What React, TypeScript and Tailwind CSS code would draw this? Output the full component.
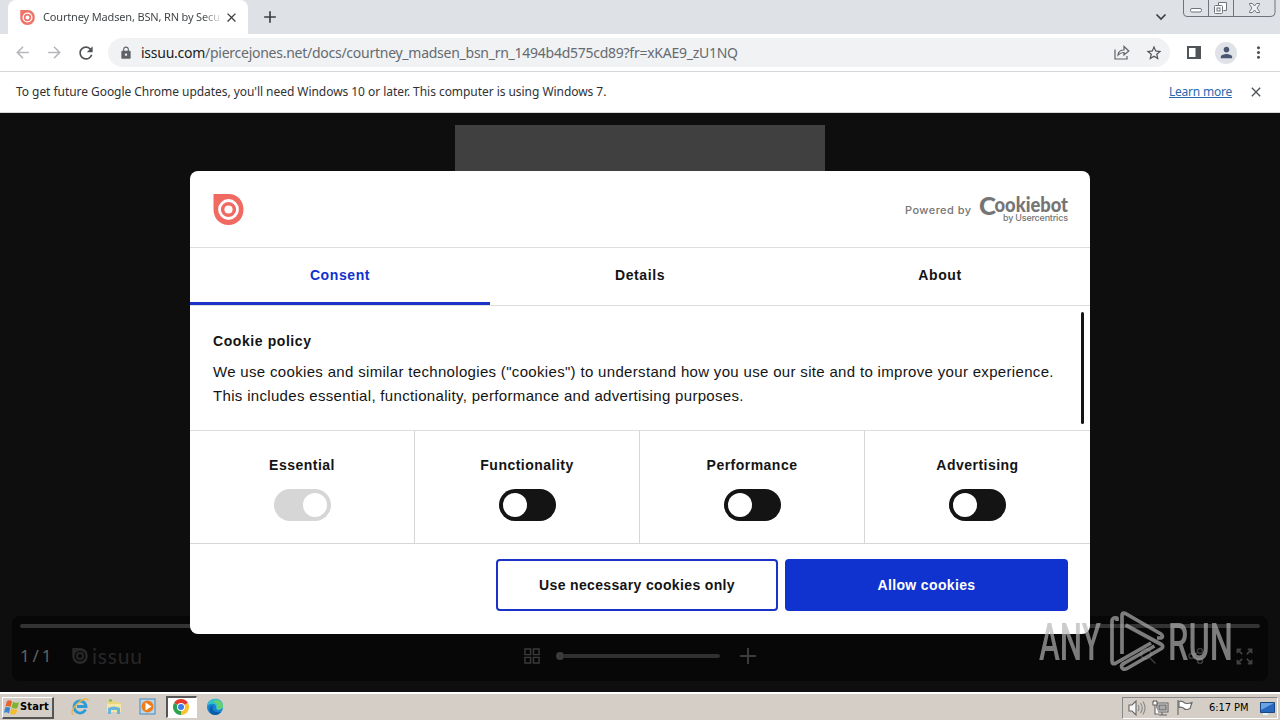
import type { ReactNode } from "react";
import { MdAdd, MdArrowBack, MdArrowForward, MdClose, MdLock, MdMoreVert, MdPerson, MdRefresh, MdStarBorder } from "react-icons/md";

const categories = [
  { label: "Essential", locked: true },
  { label: "Functionality", locked: false },
  { label: "Performance", locked: false },
  { label: "Advertising", locked: false },
];

function IssuuMark({ className, color, inner = "#fff" }: { className: string; color: string; inner?: string }) {
  return (
    <svg viewBox="0 0 30 31" className={className}>
      <path d="M0 0h15.500C24 0 30 7 30 15.500S24 31 15 31 0 24 0 15.500z" fill={color} />
      <circle cx="15" cy="15.500" r="9" fill="none" stroke={inner} strokeWidth="2.800" />
      <circle cx="15" cy="15.500" r="4.100" fill={inner} />
    </svg>
  );
}

function TabStrip() {
  return (
    <div className="flex h-[34px] shrink-0 items-start bg-[#dee1e6]">
      <div className="ml-2 flex h-[34px] w-[240px] items-center rounded-t-lg bg-white pl-3">
        <IssuuMark className="h-[15px] w-[15px] shrink-0" color="#f0736a" />
        <div className="ml-2 w-[177px] bg-gradient-to-r from-[#3c4043] from-90% to-[#3c4043]/15 bg-clip-text text-[11px] tracking-[-0.16px] whitespace-nowrap text-transparent">
          Courtney Madsen, BSN, RN by Secu
        </div>
        <MdClose className="ml-[4px] shrink-0 text-[#3c4043]" size={15} />
      </div>
      <MdAdd className="mt-[7px] ml-3 text-[#3c4043]" size={20} />
      <div className="ml-auto flex h-full">
        <svg viewBox="0 0 12 8" className="mt-[13px] mr-[16px] h-2 w-3" fill="none" stroke="#3c4043" strokeWidth="1.700">
          <path d="M1.500 1.500 6 6l4.500-4.500" />
        </svg>
        <svg viewBox="0 0 94 17" className="mr-[3px] h-[17px] w-[94px]" fill="none" stroke="#70747a">
          <path d="M.5 0v13q0 3.500 3.500 3.500h84q4 0 4-4V0M25.500 0v16M50.500 0v16" />
          <rect x="7.500" y="8.500" width="11" height="3.500" rx="1.500" fill="#fff" />
          <path d="M35.500 5.500v-3h8v8h-3" fill="#fff" />
          <rect x="31.500" y="5.500" width="8" height="8" rx="1" fill="#fff" />
          <rect x="34" y="8" width="3" height="3" />
          <path d="M66.500 3.500h3l2 2.500 2-2.500h3v1l-2.500 3.500 2.500 3.500v1h-3l-2-2.500-2 2.500h-3v-1L69 8l-2.500-3.500z" fill="#f2f3f5" />
        </svg>
      </div>
    </div>
  );
}

function Toolbar() {
  return (
    <div className="flex h-[38px] shrink-0 items-center border-b border-[#d5d7da] bg-white pl-[13px]">
      <MdArrowBack size={19} className="text-[#b5b7ba]" />
      <MdArrowForward size={19} className="ml-[13px] text-[#b5b7ba]" />
      <MdRefresh size={20} className="ml-3 text-[#505357]" />
      <div className="ml-3 flex h-[29px] w-[1062px] items-center rounded-full bg-[#f0f2f4] pl-[11px]">
        <MdLock size={14} className="mr-2 text-[#5f6368]" />
        <div className="text-[14px] tracking-[-0.26px] whitespace-nowrap text-[#666b70]">
          <span className="text-[#202124]">issuu.com</span>/piercejones.net/docs/courtney_madsen_bsn_rn_1494b4d575cd89?fr=xKAE9_zU1NQ
        </div>
        <svg viewBox="0 0 16 15" className="ml-auto h-[15px] w-4" fill="none" stroke="#5f6368" strokeWidth="1.200">
          <path d="M1 4.500v9.500h12v-3" />
          <path d="M4 10c.4-3.500 2.300-5 6-5V1.500l4.800 4.500L10 10V7.500C7.500 7.500 5.700 8.200 4 10z" />
        </svg>
        <MdStarBorder size={18} className="mr-[7px] ml-[15px] text-[#505357]" />
      </div>
      <svg viewBox="0 0 14 13" className="ml-[17px] h-[13px] w-[14px]">
        <rect x="1" y="1" width="12" height="11" fill="#fff" stroke="#505357" strokeWidth="2" />
        <path d="M8.500 0H14v13H8.500z" fill="#505357" />
      </svg>
      <div className="ml-[14px] flex h-[22px] w-[22px] items-center justify-center rounded-full bg-[#dfe2e7]">
        <MdPerson size={17} className="text-[#4a5673]" />
      </div>
      <MdMoreVert size={19} className="ml-3 text-[#505357]" />
    </div>
  );
}

function UpdateNotice() {
  return (
    <div className="flex h-[41px] shrink-0 items-center border-b border-[#d5d7da] bg-white pr-4 pl-4 text-[12px] text-[#303134]">
      <span className="whitespace-nowrap tracking-[-0.05px]">
        To get future Google Chrome updates, you'll need Windows 10 or later. This computer is using Windows 7.
      </span>
      <span className="ml-auto whitespace-nowrap tracking-[-0.22px] text-[#2a68ad] underline">Learn more</span>
      <MdClose size={16} className="ml-4 text-[#505357]" />
    </div>
  );
}

function Toggle({ locked }: { locked: boolean }) {
  return (
    <div className={`flex h-8 w-[57px] items-center rounded-full px-1 ${locked ? "justify-end bg-[#d6d6d6]" : "justify-start bg-[#141414]"}`}>
      <div className="h-6 w-6 rounded-full bg-white" />
    </div>
  );
}

function CookieDialog() {
  return (
    <div className="absolute top-[58px] left-[190px] flex h-[463px] w-[900px] flex-col overflow-hidden rounded-lg bg-white font-['Liberation_Sans',Arial,sans-serif] text-[#141414]">
      <div className="flex h-[77px] shrink-0 items-center justify-between border-b border-[#dedede] pt-px pr-[22px] pl-[23px]">
        <IssuuMark className="h-[31px] w-[31px]" color="#f16a61" />
        <svg viewBox="0 0 164 40" className="h-10 w-[164px] overflow-visible" fill="#757575">
          <text x="1" y="24" fontFamily="Inter, sans-serif" fontSize="11" fontWeight="500" textLength="66">Powered by</text>
          <text x="75" y="25" fontFamily="Lato, sans-serif" fontSize="25" fontWeight="900" textLength="17" lengthAdjust="spacingAndGlyphs">C</text>
          <text x="90.500" y="22" fontFamily="Lato, sans-serif" fontSize="20" fontWeight="900" textLength="73.500" lengthAdjust="spacingAndGlyphs">ookiebot</text>
          <text x="99" y="31" fontFamily="Inter, sans-serif" fontSize="9" fontWeight="500" textLength="65">by Usercentrics</text>
        </svg>
      </div>
      <div className="flex h-[58px] shrink-0 border-b border-[#dedede] text-center text-[14px] leading-[54px] font-bold tracking-[0.6px]">
        <div className="flex-1 border-b-3 border-[#1a32c8] text-[#1032cf]">Consent</div>
        <div className="flex-1">Details</div>
        <div className="flex-1">About</div>
      </div>
      <div className="flex h-[125px] shrink-0 justify-between border-b border-[#dedede] pr-[6px] pl-[23px]">
        <div className="pt-[23px]">
          <h2 className="text-[14px] leading-6 font-bold tracking-[0.58px]">Cookie policy</h2>
          <p className="mt-[7px] text-[15px] leading-6 tracking-[0.325px] whitespace-nowrap">
            We use cookies and similar technologies ("cookies") to understand how you use our site and to improve your experience.
            <br />
            This includes essential, functionality, performance and advertising purposes.
          </p>
        </div>
        <div className="mt-[6px] h-[112px] w-[3px] rounded-full bg-[#141414]" />
      </div>
      <div className="grid h-[113px] shrink-0 grid-cols-4 border-b border-[#d6d6d6]">
        {categories.map((category) => (
          <div key={category.label} className="flex flex-col items-center border-r border-[#d6d6d6] pt-[22px] last:border-r-0">
            <span className="mb-[12px] text-[14px] leading-6 font-bold tracking-[0.48px]">{category.label}</span>
            <Toggle locked={category.locked} />
          </div>
        ))}
      </div>
      <div className="flex justify-end gap-[7px] pt-[15px] pr-[22px] text-[14px] font-bold tracking-[0.35px]">
        <button className="h-[52px] w-[282px] rounded-[4px] border-2 border-[#1a32c8]">Use necessary cookies only</button>
        <button className="h-[52px] w-[283px] rounded-[4px] bg-[#1032cf] text-white">Allow cookies</button>
      </div>
    </div>
  );
}

function ReaderControls() {
  return (
    <div className="absolute inset-x-3 top-[503px] h-[65px] rounded-lg bg-[#070707] px-2 pt-2">
      <div className="h-1 rounded-full bg-[#333]" />
      <div className="mt-[12px] flex h-8 items-center text-[#626262]">
        <span className="w-[52px] text-[17px] tracking-[-0.8px] whitespace-nowrap">1 / 1</span>
        <IssuuMark className="h-4 w-4" color="#282828" inner="#070707" />
        <span className="ml-1 w-[56px] font-['Lato',sans-serif] text-[21px] leading-5 tracking-[0.8px] text-[#282828]">issuu</span>
        <svg viewBox="0 0 17 17" className="ml-[376px] h-4 w-4" fill="none" stroke="#3b3b3b" strokeWidth="1.500">
          <path d="M1 1h6v6H1zM10 1h6v6h-6zM1 10h6v6H1zM10 10h6v6h-6z" />
        </svg>
        <div className="ml-4 flex w-[164px] items-center">
          <div className="h-2 w-2 rounded-full bg-[#3b3b3b]" />
          <div className="h-1 flex-1 rounded-r-full bg-[#303030]" />
        </div>
        <svg viewBox="0 0 16 16" className="ml-5 h-4 w-4" stroke="#3b3b3b" strokeWidth="2">
          <path d="M8 0v16M0 8h16" />
        </svg>
        <svg viewBox="0 0 16 16" className="ml-auto h-4 w-4" fill="none" stroke="#3b3b3b" strokeWidth="1.500">
          <circle cx="6" cy="6" r="5" />
          <path d="m10 10 5.500 5.500" />
        </svg>
        <svg viewBox="0 0 16 16" className="ml-8 h-4 w-4" fill="none" stroke="#3b3b3b" strokeWidth="1.500">
          <circle cx="3.500" cy="8" r="2.500" />
          <circle cx="12" cy="3" r="2.500" />
          <circle cx="12" cy="13" r="2.500" />
          <path d="m6 7 4-3M6 9l4 3" />
        </svg>
        <svg viewBox="0 0 18 18" className="mr-[7px] ml-8 h-[17px] w-[17px]" fill="none" stroke="#424242" strokeWidth="1.800">
          <path d="M1.500 5.500v-4h4M1.500 1.500l5 5M12.500 1.500h4v4M16.500 1.500l-5 5M1.500 12.500v4h4M1.500 16.500l5-5M12.500 16.500h4v-4M16.500 16.500l-5-5" />
        </svg>
      </div>
    </div>
  );
}

function Watermark() {
  return (
    <svg viewBox="0 0 200 64" className="absolute top-[496px] left-[1036px] h-16 w-[200px] overflow-visible" fill="#b4b4b4" opacity="0.68">
      <text x="3" y="50.500" fontFamily="Roboto, sans-serif" fontSize="52" fontWeight="500" textLength="62" lengthAdjust="spacingAndGlyphs">ANY</text>
      <text x="132" y="50.500" fontFamily="Roboto, sans-serif" fontSize="52" fontWeight="500" textLength="65" lengthAdjust="spacingAndGlyphs">RUN</text>
      <g fill="none" stroke="#b4b4b4" strokeWidth="3.700" strokeLinejoin="round">
        <path d="M81 12V9q-5-1-5 3v40q0 4 4 2l35-20" />
        <path d="M86 45V7q0-4 3.500-2.500L125 25q3 3 0 4h-4" />
        <path d="m89.500 16 36 19.500q2.500 2 0 4L91 59.500q-5 2-5.500-2 0-2 3-3.500l30-17" />
      </g>
    </svg>
  );
}

function TrayIcon({ children }: { children: ReactNode }) {
  return (
    <svg viewBox="0 0 18 18" className="h-[18px] w-[18px]" fill="none" stroke="#666" strokeWidth="1.100">
      {children}
    </svg>
  );
}

function Taskbar() {
  return (
    <div className="flex h-7 shrink-0 items-center border-t-2 border-white bg-[#d4cec6] pl-[2px]">
      <div className="mt-[1px] flex h-[22px] w-[52px] items-center border-t border-r-2 border-b-2 border-l border-t-white border-r-[#555] border-b-[#555] border-l-white pl-[1px] font-bold text-black">
        <svg viewBox="0 0 16 15" className="h-[15px] w-4 shrink-0">
          <path d="M3 1q3-1.500 5 .5L6.500 7Q4 5.500 1.500 6.500z" fill="#e8622c" />
          <path d="M9 2q3 1.500 6 .2L13.500 8Q11 9 7.500 7.500z" fill="#7fb52e" />
          <path d="M1.200 7.500Q4 6.500 6.200 8L5 13.500q-2.500-2-5-.7z" fill="#3d85cf" />
          <path d="M7.300 8.500q3 1.500 6 .5L12 14q-3 1.200-6-.5z" fill="#f4bd29" />
        </svg>
        <span className="w-[31px] pt-px font-['DejaVu_Sans_Condensed','DejaVu_Sans',sans-serif] text-[11px] tracking-[0.15px]">Start</span>
      </div>
      <div className="ml-[17px] flex h-6 items-center">
        <svg viewBox="0 0 18 18" className="h-[18px] w-[18px]" fill="none">
          <path d="M14.500 11.500A6 6 0 1 1 15 8.500H6" stroke="#2e9bd6" strokeWidth="2.800" />
          <path d="M3 16C-1 17 1 10 7 5s10-5 10-2" stroke="#e8b83e" strokeWidth="1.300" />
        </svg>
        <svg viewBox="0 0 18 18" className="ml-4 h-[18px] w-[18px]">
          <path d="M2 4q0-2 2-2h4l1 2h5q2 0 2 2v7H2z" fill="#ecd67c" />
          <path d="M4 1.500h3v2H4z" fill="#74b95b" />
          <path d="M2 6h14v8H2z" fill="#f5e7a8" />
          <path d="M3 10q6-3 12 0v6h-3v-4H6v4H3z" fill="#68b5dc" />
        </svg>
        <svg viewBox="0 0 18 18" className="ml-4 h-[18px] w-[18px]">
          <rect x="1" y="1" width="15" height="15" fill="#b9d8ef" stroke="#4b88b8" />
          <circle cx="8.500" cy="8.500" r="6" fill="#ef7d1a" />
          <path d="m6.500 4.500 6 4-6 4z" fill="#fff" />
        </svg>
        <div className="ml-[9px] flex h-[22px] w-[31px] items-center justify-center border-t-2 border-r border-b border-l-2 border-t-[#555] border-r-white border-b-white border-l-[#555] bg-white pr-[2px]">
          <svg viewBox="0 0 16 16" className="mb-px h-4 w-4">
            <path d="M8 8 1.070 4A8 8 0 0 1 14.930 4z" fill="#e33b2e" />
            <path d="M8 8 14.930 4A8 8 0 0 1 8 16z" fill="#f9c22e" />
            <path d="M8 8v8A8 8 0 0 1 1.070 4z" fill="#2da24c" />
            <circle cx="8" cy="8" r="4" fill="#fff" />
            <circle cx="8" cy="8" r="3" fill="#3b7de9" />
          </svg>
        </div>
        <svg viewBox="0 0 18 18" className="ml-[9px] h-[18px] w-[18px]">
          <circle cx="9" cy="9" r="8" fill="#1583cf" />
          <path d="M1 8C2-1 17-2 17 8c0 5-7 5-7 2 1-4-4-6-9-2z" fill="#37bfc9" />
          <path d="M10 2c5 0 7 4 7 6 0 3-5 4-6 3 1-4-1-7-4-7z" fill="#65cf72" />
          <path d="M7 8c-2 4 1 7 8 6-3 4-9 4-11 0-1-3 0-6 3-6z" fill="#0d5ba6" />
        </svg>
      </div>
      <div className="mt-[1px] mr-[2px] ml-auto flex h-[22px] w-[156px] items-center border-t border-r border-b border-l border-t-[#888] border-r-white border-b-white border-l-[#888] pl-[5px] text-[11px] text-black">
        <TrayIcon>
          <path d="M1 6h3l4-4v14l-4-4H1z" fill="#f7f7f7" />
          <path d="M10 6q2 3 0 6M12.500 4q3.500 5 0 10M15 2.500q4 6.500 0 13" stroke="#888" />
        </TrayIcon>
        <div className="ml-[6px]">
          <TrayIcon>
            <path d="M5 4h11v9H5z" fill="#ddd" />
            <path d="M7 6h7v5H7z" fill="#aaa" />
            <path d="M10 13v3M7 16h8" />
            <path d="M1 2v4h4V2M3 6v9h4M2 1v2M4 1v2" fill="#fff" />
          </TrayIcon>
        </div>
        <div className="ml-[6px]">
          <TrayIcon>
            <path d="M2 1v15" />
            <path d="M3 2.500q3-1 5 1t8 0l-2 6q-4 2-6 0t-5-1z" fill="#fff" />
          </TrayIcon>
        </div>
        <span className="ml-[15px] w-[41px] pt-px whitespace-nowrap font-['DejaVu_Sans_Condensed','DejaVu_Sans',sans-serif] tracking-[-0.05px]">6:17 PM</span>
        <svg viewBox="0 0 16 14" className="ml-[10px] h-[14px] w-4 shrink-0">
          <path d="M.5 1.500h14v10H.5z" fill="#2867bc" stroke="#174882" />
          <path d="M1 2h13L1 9z" fill="#69a5e4" />
          <path d="M3 13h5" stroke="#e6f2ff" strokeWidth="2" />
        </svg>
      </div>
    </div>
  );
}

export default function App() {
  return (
    <div className="flex h-[720px] w-[1280px] flex-col overflow-hidden font-['Noto_Sans',Tahoma,sans-serif]">
      <TabStrip />
      <Toolbar />
      <UpdateNotice />
      <main className="relative flex-1 bg-[#0e0e0e] pt-3">
        <div className="mx-auto h-[100px] w-[370px] bg-[#404040]" />
        <ReaderControls />
        <CookieDialog />
        <Watermark />
      </main>
      <Taskbar />
    </div>
  );
}
